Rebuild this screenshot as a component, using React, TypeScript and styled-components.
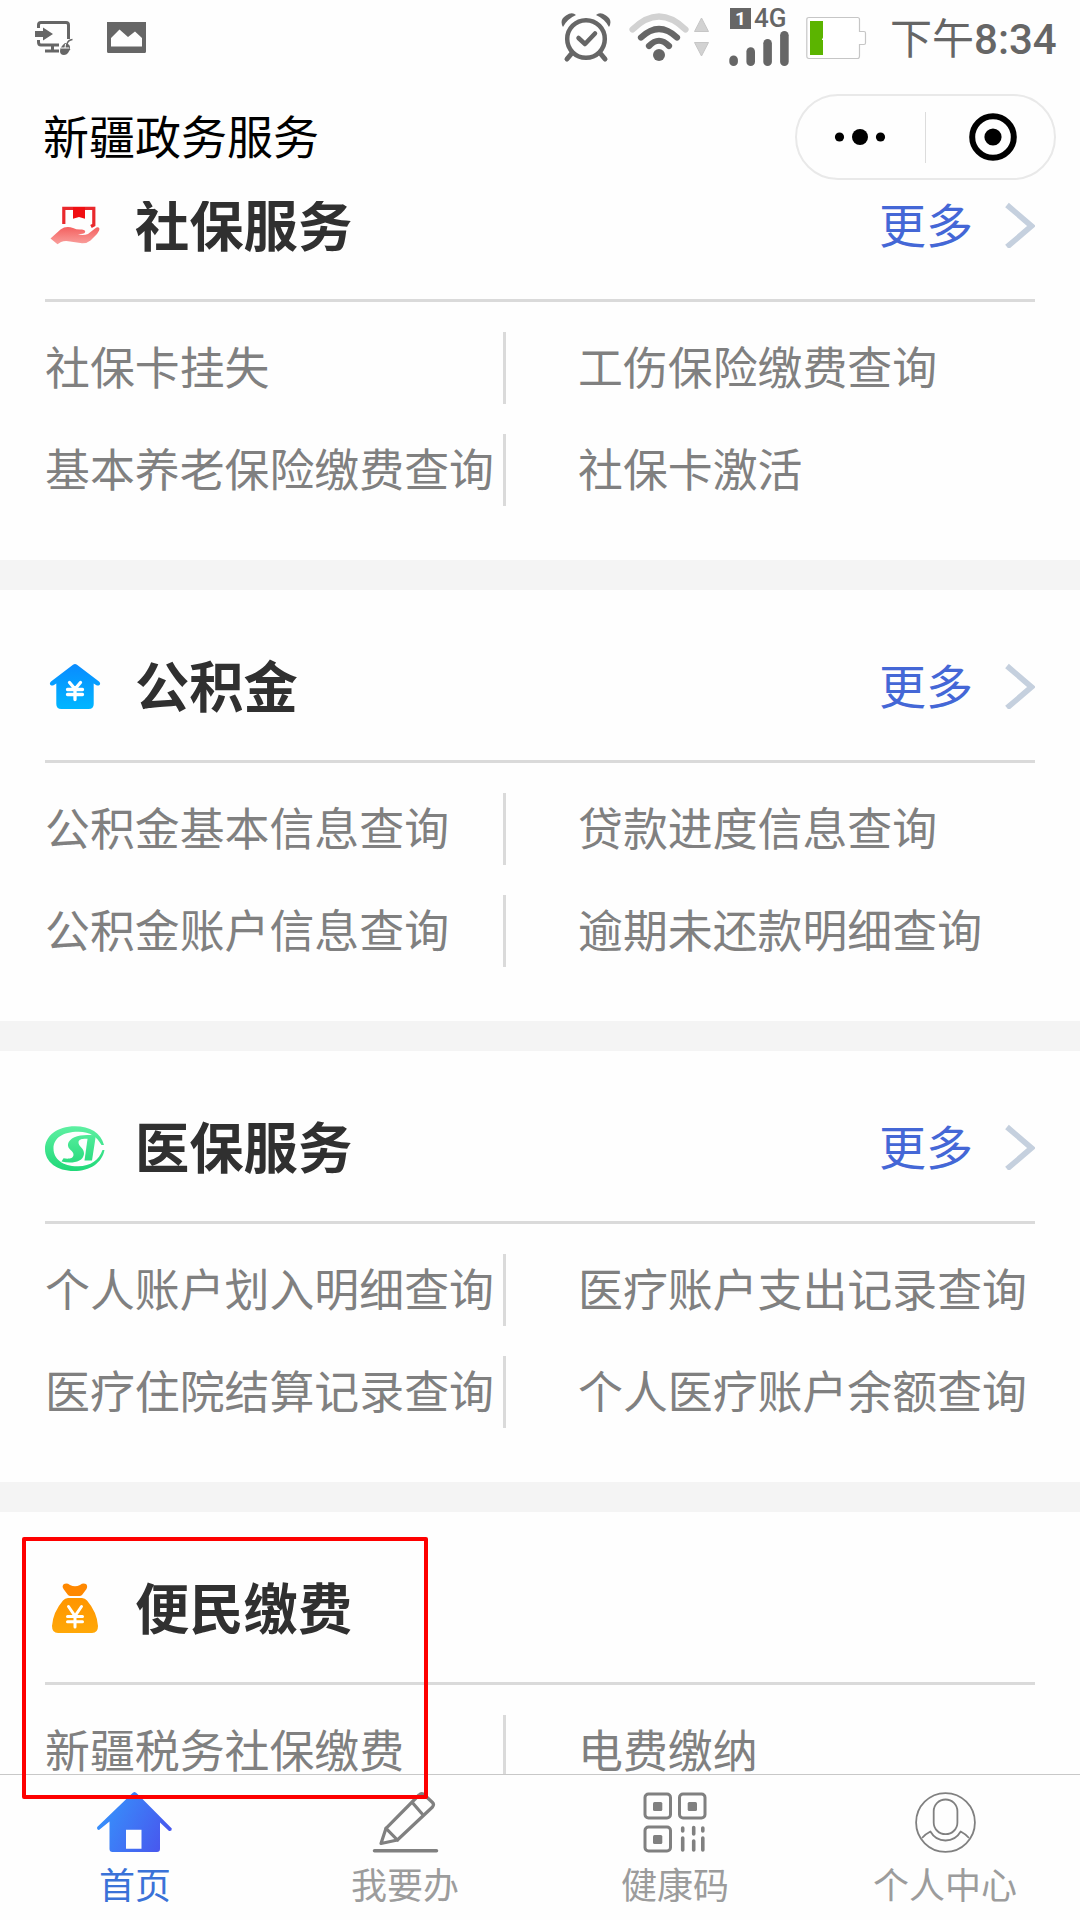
import React from "react";
import styled, { createGlobalStyle } from "styled-components";

const GlobalStyle = createGlobalStyle`
  *, *::before, *::after { box-sizing: border-box; }
  body {
    margin: 0;
    background: #fefefe;
    font-family: "Noto Sans CJK SC", sans-serif;
  }
  svg { display: block; flex: none; }
`;

const Screen = styled.div`
  position: relative;
  display: flex;
  flex-direction: column;
  width: 1080px;
  height: 1920px;
  overflow: hidden;
  background: #fefefe;
`;

const StatusBar = styled.header`
  display: flex;
  flex: none;
  align-items: center;
  height: 76px;
  padding: 0 24px 0 35px;
`;

const StatusGroup = styled.div<{ $gap: number; $push?: boolean }>`
  display: flex;
  align-items: center;
  gap: ${(p) => p.$gap}px;
  margin-left: ${(p) => (p.$push ? "auto" : "0")};
`;

const Signal = styled.div`
  display: flex;
  flex-direction: column;
  width: 60px;
  margin-left: 2px;
`;

const Network = styled.div`
  display: flex;
  align-items: flex-start;
  gap: 3px;
  height: 22px;
  padding-left: 1px;
  font: 500 26px/20px Roboto, sans-serif;
  color: #666;
`;

const SimBadge = styled.span`
  width: 21px;
  height: 21px;
  background: #666;
  color: #fff;
  font: 700 19px/21px Roboto, sans-serif;
  text-align: center;
`;

const Clock = styled.time`
  display: block;
  width: 166px;
  margin-left: 6px;
  padding-top: 4px;
  font: 400 42px/60px Roboto, "Noto Sans CJK SC", sans-serif;
  color: #666;
  white-space: nowrap;
`;

const Digits = styled.span`
  font-weight: 500;
`;

const NavBar = styled.div`
  display: flex;
  flex: none;
  align-items: center;
  justify-content: space-between;
  height: 125px;
  padding: 0 24px 3px 43px;
`;

const NavTitle = styled.h1`
  margin: 0;
  padding-bottom: 6px;
  font-size: 46px;
  font-weight: 400;
  line-height: 68px;
  color: #000;
`;

const Capsule = styled.div`
  display: flex;
  align-items: center;
  width: 261px;
  height: 86px;
  border: 2px solid #e9e9e9;
  border-radius: 43px;
`;

const CapsuleHalf = styled.div<{ $inset?: string }>`
  display: flex;
  flex: none;
  align-items: center;
  justify-content: center;
  width: 128px;
  height: 51px;
  padding: ${(p) => p.$inset || "0"};

  & + & { border-left: 1px solid #dcdcdc; }
`;

const Feed = styled.main`
  flex: 1;
  min-height: 0;
  overflow: hidden;
`;

const Sections = styled.div`
  display: flex;
  flex-direction: column;
  gap: 30px;
  margin-top: -72px;
  background: #f4f4f4;
`;

const Section = styled.section`
  flex: none;
  height: 431px;
  padding: 0 45px;
  background: #fefefe;
`;

const SectionHead = styled.div`
  display: flex;
  align-items: center;
  height: 173px;
  padding-top: 22px;
  border-bottom: 3px solid #dadada;
`;

const SectionTitle = styled.h2`
  flex: 1;
  margin: 0 0 0 30px;
  padding-bottom: 4px;
  font-size: 54.3px;
  font-weight: 700;
  line-height: 80px;
  color: #303030;
`;

const More = styled.a`
  display: flex;
  align-items: center;
  gap: 32px;
  font-size: 47px;
  line-height: 66px;
  color: #4467d6;
`;

const MoreLabel = styled.span`
  padding-bottom: 4px;
`;

const Links = styled.div`
  display: grid;
  grid-template-columns: 461px 1fr;
  row-gap: 30px;
  padding-top: 30px;
`;

const LinkCell = styled.a<{ $left?: boolean }>`
  height: 72px;
  padding-left: ${(p) => (p.$left ? 0 : 72)}px;
  border-right: ${(p) => (p.$left ? "3px solid #dadada" : "none")};
  font-size: 44.9px;
  line-height: 67px;
  color: #808080;
  white-space: nowrap;
`;

const TabBar = styled.nav`
  display: flex;
  flex: none;
  height: 146px;
  border-top: 1px solid #c8c8c8;
  background: #fefefe;
`;

const Tab = styled.a<{ $active?: boolean }>`
  display: flex;
  flex: 1;
  flex-direction: column;
  align-items: center;
  padding-top: 15px;
  font-size: 36px;
  line-height: 52px;
  color: ${(p) => (p.$active ? "#3a72d8" : "#9c9c9c")};

  svg { margin-bottom: 3px; }
`;

const Highlight = styled.div`
  position: absolute;
  left: 22px;
  top: 1537px;
  width: 406px;
  height: 262px;
  border: 4px solid #fe0000;
  border-radius: 2px;
`;

const HandBoxIcon = () => (
  <svg width="60" height="60" viewBox="0 0 60 60">
    <defs>
      <linearGradient id="hand" x1="0" y1="0" x2="0" y2="1">
        <stop offset="0" stopColor="#f4605f" />
        <stop offset="1" stopColor="#f9a09d" />
      </linearGradient>
    </defs>
    <path d="M18.800 29V13.300H48.800V30L46 31.500" fill="none" stroke="#e9282c" strokeWidth="3.200" />
    <path d="M28 12H40V23.800L34 22L28 23.800Z" fill="#f00e12" />
    <path
      d="M5.500 43.500L15.500 34.500Q21 30.500 28 33Q32 35 37 34.500Q41 35 40 37.500Q39 39 33 39.300Q38 41 43 39L50 33.500Q53 31 54.300 33.300Q55 35 52 39L45.500 45.500Q42 48.500 37 48.300L25 46.500Q20 45.500 16 47L12.500 49.300Z"
      fill="url(#hand)"
    />
  </svg>
);

const FundHouseIcon = () => (
  <svg width="60" height="60" viewBox="0 0 60 60">
    <defs>
      <linearGradient id="fund" x1="0" y1="0" x2="0" y2="1">
        <stop offset="0" stopColor="#0a8bff" />
        <stop offset="1" stopColor="#00b6ff" />
      </linearGradient>
    </defs>
    <path
      d="M28 8.800Q30 7.400 32 8.800L54 25.500Q56 27.500 54.500 29Q53 30.200 51 29L48.700 27.500V48Q48.700 53 43.700 53H16.300Q11.300 53 11.300 48V27.500L9 29Q7 30.200 5.500 29Q4 27.500 6 25.500Z"
      fill="url(#fund)"
    />
    <path
      d="M24.500 26.500L30 33L35.500 26.500M22.500 33.500H37.500M22.500 38.500H37.500M30 33V43.500"
      fill="none"
      stroke="#fff"
      strokeWidth="3.300"
      strokeLinecap="round"
      strokeLinejoin="round"
    />
  </svg>
);

const MedicalIcon = () => (
  <svg width="60" height="60" viewBox="0 0 60 60">
    <defs>
      <linearGradient id="med" gradientUnits="userSpaceOnUse" x1="0" y1="9" x2="0" y2="54">
        <stop offset="0" stopColor="#5ef0a2" />
        <stop offset="1" stopColor="#20d878" />
      </linearGradient>
    </defs>
    <path
      d="M59 28C56 16 45 9.300 30 9.300C12 9.300 0 19 0 32C0 45 12 54 29 54C45 54 57 46 59.500 33H57.500C54 43 46 49 33 49.300C18 49.500 8.500 42 8.500 31.500C8.500 21 18 15 33 14.800C45 14.600 52 20 56.500 28Z"
      fill="url(#med)"
    />
    <path
      d="M48 18.300C36 16.800 24.500 20 23 27C22 32.500 29 33.500 28.500 38C28 42 23 42 18.500 41.300L16.500 44.500C26 47 38 45.500 39 37C39.600 31 33 29.500 33.500 25C34 21.800 39 21.500 44 22Z"
      fill="url(#med)"
    />
    <path d="M43 19L51 17.500L47 43.500H39.500L42.500 22Z" fill="url(#med)" />
  </svg>
);

const MoneyBagIcon = () => (
  <svg width="60" height="60" viewBox="0 0 60 60">
    <defs>
      <linearGradient id="bag" x1="0" y1="0" x2="0" y2="1">
        <stop offset="0" stopColor="#ff9500" />
        <stop offset="1" stopColor="#ffa808" />
      </linearGradient>
    </defs>
    <path
      d="M19 6Q22 4.800 25 7Q30 9.500 35 7Q38 4.800 41 6Q43 8 41.500 11L37 17Q36 18 34.500 18H25.500Q24 18 23 17L18.500 11Q16.500 8 19 6Z"
      fill="#ff8800"
    />
    <path
      d="M23 20H37Q40 20 42 22.500Q52 34 53 48Q53 55 47 55H13Q7 55 7 48Q8 34 18 22.500Q20 20 23 20Z"
      fill="url(#bag)"
    />
    <path
      d="M23.500 28.500L30 38L36.500 28.500M22.500 38.500H37.500M22.500 43.700H37.500M30 38V49"
      fill="none"
      stroke="#fff"
      strokeWidth="3"
      strokeLinecap="round"
    />
  </svg>
);

const Chevron = () => (
  <svg width="30" height="46" viewBox="0 -1 30 46">
    <path d="M2 2L26.500 23L2 44" fill="none" stroke="#c5d0de" strokeWidth="5.600" />
  </svg>
);

const CastIcon = () => (
  <svg width="38" height="34" viewBox="0 0 38 34">
    <g fill="none" stroke="#666" strokeWidth="3">
      <path d="M3.500 7V4Q3.500 1.500 6 1.500H31Q33.500 1.500 33.500 4V18" />
      <path d="M3.500 19V21Q3.500 24 6 24H24M17.500 24V30M10 30H24" />
    </g>
    <path d="M0 10H8V6.500L18 13L8 19.500V16H0Z" fill="#666" />
    <path d="M25 30Q25 26 30 22Q35 23 35 26Q34 34 29 34Q25 34 25 30Z" fill="#666" />
    <path d="M32 23Q33 19 37.500 18.500M29 24L35 29" fill="none" stroke="#666" strokeWidth="1.400" />
    <path d="M26 27L34 27M30.500 23L30 27" stroke="#fff" strokeWidth="1" />
  </svg>
);

const PictureIcon = () => (
  <svg width="39" height="32" viewBox="0 1 39 32">
    <path
      fillRule="evenodd"
      d="M1.500 0H37.500Q39 0 39 1.500V30.500Q39 32 37.500 32H1.500Q0 32 0 30.500V1.500Q0 0 1.500 0ZM4 25.500H35V17L28 10.500L21 16L12.500 8.500L4 17Z"
      fill="#666"
      overflow="visible"
    />
  </svg>
);

const AlarmIcon = () => (
  <svg width="50" height="50" viewBox="0 0 50 50">
    <circle cx="25" cy="26" r="18.800" fill="none" stroke="#666" strokeWidth="4.500" />
    <path
      d="M17.500 25L24 31L34 20.500"
      fill="none"
      stroke="#666"
      strokeWidth="4.500"
      strokeLinecap="round"
      strokeLinejoin="round"
    />
    <path d="M11 40L6 46M39 40L44 46" stroke="#666" strokeWidth="5" strokeLinecap="round" />
    <path d="M2 14Q-2 7 5 2.500Q11-1.500 15 2Q6 6 2 14ZM48 14Q52 7 45 2.500Q39-1.500 35 2Q44 6 48 14Z" fill="#666" />
  </svg>
);

const WifiIcon = () => (
  <svg width="82" height="52" viewBox="0 0 82 52">
    <g fill="none" strokeWidth="6.200" strokeLinecap="round">
      <path d="M4.500 17.500Q31 -8.500 57.500 17.500" stroke="#d2d2d2" />
      <path d="M13 25.500Q31 8.500 49 25.500" stroke="#666" />
      <path d="M21 34Q31 23.500 41 34" stroke="#666" />
    </g>
    <circle cx="31" cy="43" r="6" fill="#666" />
    <path d="M73.500 6L80.500 19.500H66.500ZM73.500 44L66.500 30.500H80.500Z" fill="#d2d2d2" stroke="#c6c6c6" />
  </svg>
);

const BARS = [
  { x: 4.6, top: 25.5 },
  { x: 21.7, top: 17.3 },
  { x: 38.6, top: 9 },
  { x: 55.4, top: 1 },
];

const BarsIcon = () => (
  <svg width="60" height="38" viewBox="0 0 60 38">
    {BARS.map((b) => (
      <rect key={b.x} x={b.x - 4.3} y={b.top} width="8.600" height={36 - b.top} rx="4.300" fill="#666" />
    ))}
  </svg>
);

const BatteryIcon = () => (
  <svg width="61" height="44" viewBox="0 0 61 44">
    <path
      d="M3 1.500H51.500Q53.500 1.500 53.500 3.500V15.500H58Q59.500 15.500 59.500 17V27Q59.500 28.500 58 28.500H53.500V40Q53.500 42.500 51.500 42.500H3Q.8 42.500 .8 40V3.500Q.8 1.500 3 1.500Z"
      fill="#fff"
      stroke="#c6c6c6"
      strokeWidth="1.200"
    />
    <rect x="4" y="5" width="13" height="34" fill="#5bb400" />
    <path d="M17 21.500L15.800 24H17Z" fill="#fff" />
  </svg>
);

const DotsIcon = () => (
  <svg width="52" height="18" viewBox="0 0 52 18">
    <circle cx="5.500" cy="9" r="4.600" />
    <circle cx="26" cy="9" r="8" />
    <circle cx="46.500" cy="9" r="4.600" />
  </svg>
);

const TargetIcon = () => (
  <svg width="48" height="48" viewBox="0 0 48 48">
    <circle cx="24" cy="24" r="20.800" fill="none" stroke="#000" strokeWidth="6" />
    <circle cx="24" cy="24" r="8.600" />
  </svg>
);

const HomeIcon = () => (
  <svg width="80" height="64" viewBox="0 0 80 64">
    <defs>
      <linearGradient id="home" gradientUnits="userSpaceOnUse" x1="8" y1="20" x2="70" y2="50">
        <stop offset="0" stopColor="#3790fb" />
        <stop offset="1" stopColor="#4858ee" />
      </linearGradient>
    </defs>
    <path
      fillRule="evenodd"
      d="M39.500 2Q41 2 43 4.500L76.800 38.500Q77 41.500 74 41L65 32.500V59Q65 62 62 62H17.500Q14.500 62 14.500 59V31.500L4 40Q1.500 39.500 2.200 37L36 4.500Q38 2 39.500 2ZM31 39.700V58.700H46.500V39.700Z"
      fill="url(#home)"
    />
  </svg>
);

const PencilIcon = () => (
  <svg width="80" height="64" viewBox="0 0 80 64">
    <g fill="none" stroke="#808080" strokeWidth="3.200" strokeLinejoin="round" strokeLinecap="round">
      <path d="M16 53.500L21 38.300L54 5Q56.800 2 59.500 5L67.500 12.500Q69.500 14.500 67.500 17L32.400 50Z" />
      <path d="M47.500 12.700L57.900 24.700M21 38.300L32.400 50" />
      <path d="M9.500 60.700H71.500" strokeWidth="3.500" />
    </g>
  </svg>
);

const CodeIcon = () => (
  <svg width="80" height="64" viewBox="0 0 80 64">
    <g fill="none" stroke="#808080" strokeWidth="3">
      <rect x="10" y="4" width="25.500" height="24" rx="3.500" />
      <rect x="44.500" y="4" width="25.500" height="24" rx="3.500" />
      <rect x="10" y="37" width="25.500" height="24" rx="3.500" />
    </g>
    <g fill="#808080">
      <rect x="18" y="12" width="9.300" height="9" rx="1.500" />
      <rect x="52.700" y="12" width="9.300" height="9" rx="1.500" />
      <rect x="18" y="45" width="9.300" height="9" rx="1.500" />
    </g>
    <path
      d="M47.700 38V41M47.700 48V60M58.700 37.500V44M58.700 51V60M67.800 38V41M67.800 48V60"
      stroke="#808080"
      strokeWidth="3.600"
      strokeLinecap="round"
    />
  </svg>
);

const PersonIcon = () => (
  <svg width="80" height="64" viewBox="0 0 80 64">
    <g fill="none" stroke="#808080" strokeWidth="1.800" strokeLinejoin="round">
      <circle cx="40.500" cy="32.500" r="29.400" />
      <rect x="28.700" y="9.500" width="23.700" height="34.700" rx="11.800" />
      <path d="M17 48Q20.500 44 25.400 41.500Q30.500 50.500 40.500 50.500Q50.500 50.500 55.700 41.500Q60.500 44 64 48" />
    </g>
  </svg>
);

const SECTIONS = [
  {
    title: "社保服务",
    icon: <HandBoxIcon />,
    more: true,
    links: ["社保卡挂失", "工伤保险缴费查询", "基本养老保险缴费查询", "社保卡激活"],
  },
  {
    title: "公积金",
    icon: <FundHouseIcon />,
    more: true,
    links: ["公积金基本信息查询", "贷款进度信息查询", "公积金账户信息查询", "逾期未还款明细查询"],
  },
  {
    title: "医保服务",
    icon: <MedicalIcon />,
    more: true,
    links: ["个人账户划入明细查询", "医疗账户支出记录查询", "医疗住院结算记录查询", "个人医疗账户余额查询"],
  },
  {
    title: "便民缴费",
    icon: <MoneyBagIcon />,
    more: false,
    links: ["新疆税务社保缴费", "电费缴纳"],
  },
];

const TABS = [
  { label: "首页", icon: <HomeIcon /> },
  { label: "我要办", icon: <PencilIcon /> },
  { label: "健康码", icon: <CodeIcon /> },
  { label: "个人中心", icon: <PersonIcon /> },
];

export default function App() {
  return (
    <>
      <GlobalStyle />
      <Screen>
        <StatusBar>
          <StatusGroup $gap={34}>
            <CastIcon />
            <PictureIcon />
          </StatusGroup>
          <StatusGroup $gap={17} $push>
            <AlarmIcon />
            <WifiIcon />
            <Signal>
              <Network>
                <SimBadge>1</SimBadge>4G
              </Network>
              <BarsIcon />
            </Signal>
            <BatteryIcon />
            <Clock>
              下午<Digits>8:34</Digits>
            </Clock>
          </StatusGroup>
        </StatusBar>
        <NavBar>
          <NavTitle>新疆政务服务</NavTitle>
          <Capsule>
            <CapsuleHalf $inset="0 2px 0 0">
              <DotsIcon />
            </CapsuleHalf>
            <CapsuleHalf $inset="0 0 0 6px">
              <TargetIcon />
            </CapsuleHalf>
          </Capsule>
        </NavBar>
        <Feed>
          <Sections>
            {SECTIONS.map((s) => (
              <Section key={s.title}>
                <SectionHead>
                  {s.icon}
                  <SectionTitle>{s.title}</SectionTitle>
                  {s.more && (
                    <More>
                      <MoreLabel>更多</MoreLabel>
                      <Chevron />
                    </More>
                  )}
                </SectionHead>
                <Links>
                  {s.links.map((text, i) => (
                    <LinkCell key={text} $left={i % 2 === 0}>
                      {text}
                    </LinkCell>
                  ))}
                </Links>
              </Section>
            ))}
          </Sections>
        </Feed>
        <TabBar>
          {TABS.map((t, i) => (
            <Tab key={t.label} $active={i === 0}>
              {t.icon}
              {t.label}
            </Tab>
          ))}
        </TabBar>
        <Highlight />
      </Screen>
    </>
  );
}
